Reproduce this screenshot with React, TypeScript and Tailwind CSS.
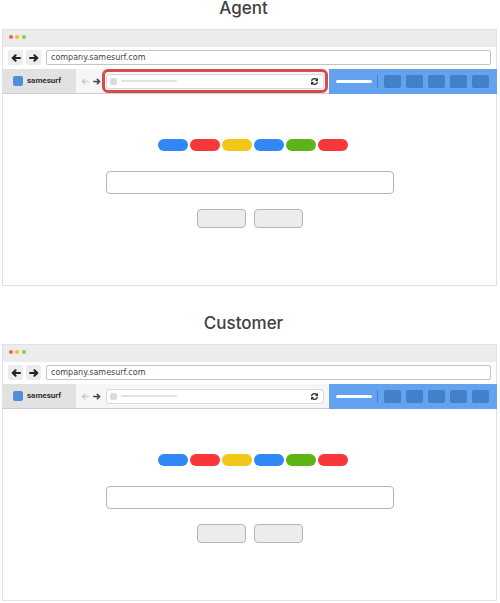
import React from "react";

const PILLS = [
  "bg-[#3087f5]",
  "bg-[#f83838]",
  "bg-[#f3c717]",
  "bg-[#3087f5]",
  "bg-[#5eb317]",
  "bg-[#f83838]",
];

function Arrow({ flip = false, className = "" }: { flip?: boolean; className?: string }) {
  return (
    <svg
      viewBox="0 0 10 8"
      aria-hidden="true"
      fill="none"
      stroke="currentColor"
      strokeWidth="2"
      className={`${className} ${flip ? "-scale-x-100" : ""}`}
    >
      <path d="M1 4H8M5.4 1.2L8.3 4L5.4 6.8" strokeLinecap="round" strokeLinejoin="round" />
    </svg>
  );
}

function Refresh() {
  return (
    <svg viewBox="0 0 1536 1536" aria-hidden="true" fill="currentColor" className="size-[7px]">
      <path
        stroke="currentColor"
        strokeWidth="60"
        d="M1511 928q0 5-1 7-64 268-268 434.5t-478 166.5q-146 0-282.5-55t-243.5-157l-129 129q-19 19-45 19t-45-19-19-45v-448q0-26 19-45t45-19h448q26 0 45 19t19 45-19 45l-137 137q71 66 161 102t187 36q134 0 250-65t186-179q11-17 53-117 8-23 30-23h192q13 0 22.5 9.5t9.5 22.5zm25-800v448q0 26-19 45t-45 19h-448q-26 0-45-19t-19-45 19-45l138-138q-148-137-349-137-134 0-250 65t-186 179q-11 17-53 117-8 23-30 23h-199q-13 0-22.5-9.5t-9.5-22.5v-7q65-268 270-434.5t480-166.5q146 0 284 55.5t245 156.5l130-129q19-19 45-19t45 19 19 45z"
      />
    </svg>
  );
}

function TitleBar() {
  return (
    <div className="flex h-[18px] items-center gap-[2px] border border-b-0 border-[#e2e2e2] bg-[#ececec] px-[6px] pb-[3px]">
      <span className="size-1 rounded-full bg-[#ed5f5c]" />
      <span className="size-1 rounded-full bg-[#fabd09]" />
      <span className="ml-px size-1 rounded-full bg-[#8fcb52]" />
    </div>
  );
}

function AddressRow() {
  return (
    <div className="flex h-[22px] items-center gap-[3px] border-x border-[#e2e2e2] px-[5px] pb-px">
      <button aria-label="Back" className="flex size-[15px] items-center justify-center rounded-[2px] bg-[#ececec] text-[#222]">
        <Arrow flip className="h-2 w-[10px]" />
      </button>
      <button aria-label="Forward" className="flex size-[15px] items-center justify-center rounded-[2px] bg-[#ececec] text-[#222]">
        <Arrow className="h-2 w-[10px]" />
      </button>
      <input
        aria-label="Address"
        defaultValue="company.samesurf.com"
        className="ml-[2px] h-[15px] min-w-0 flex-1 rounded-[2px] border border-[#c4c4c4] bg-white px-1 font-['DejaVu_Sans',sans-serif] text-[8px] leading-3 text-[#444] outline-none"
      />
    </div>
  );
}

function Toolbar({ highlighted }: { highlighted: boolean }) {
  return (
    <div className="flex h-[25px]">
      <div className="flex w-[74px] items-center gap-1 border-b border-[#cfcfcf] bg-[#e2e2e2] pl-[11px]">
        <span className="size-[10px] rounded-[2px] bg-[#508edc]" />
        <span className="font-[Roboto,sans-serif] text-[8px] leading-3 font-bold text-[#333]">samesurf</span>
      </div>
      <div className="flex min-w-0 flex-1 items-center border-b border-[#cfcfcf] bg-[#f6f6f6] pl-[5px]">
        <button aria-label="Page back" className="mr-1 text-[#ccc]">
          <Arrow flip className="h-[7px] w-2" />
        </button>
        <button aria-label="Page forward" className="text-[#444]">
          <Arrow className="h-[7px] w-2" />
        </button>
        <div
          className={`mx-px flex h-6 min-w-0 flex-1 items-center rounded-md border-3 px-px ${
            highlighted ? "border-[#d94a4a]" : "border-transparent"
          }`}
        >
          <div className="flex h-[15px] flex-1 items-center rounded-[3px] border border-[#d9d9d9] bg-white px-[3px]">
            <span className="size-[7px] rounded-[2px] bg-[#dcdcdc]" />
            <span className="ml-1 h-[2px] w-14 rounded-full bg-[#e2e2e2]" />
            <button aria-label="Refresh" className="mr-[2px] ml-auto text-[#333]">
              <Refresh />
            </button>
          </div>
        </div>
      </div>
      <div className="flex w-[168px] items-center bg-[#62a2ee] px-[7px]">
        <span className="h-[3px] w-9 rounded-full bg-white" />
        <span className="mx-[5px] h-[13px] w-px bg-[#4280c8]" />
        <div className="ml-px flex gap-[5px]">
          {[1, 2, 3, 4, 5].map((n) => (
            <button key={n} aria-label={`Tool ${n}`} className="h-[13px] w-[17px] rounded-[2px] bg-[#4280c8]" />
          ))}
        </div>
      </div>
    </div>
  );
}

function SearchPage() {
  return (
    <div className="flex flex-col items-center border border-t-0 border-[#e2e2e2] pt-[45px] pb-[57px]">
      <div className="flex gap-[2px] pl-[6px]">
        {PILLS.map((color, i) => (
          <span key={i} className={`h-3 w-[30px] rounded-full ${color}`} />
        ))}
      </div>
      <input
        aria-label="Search"
        className="mt-5 h-[23px] w-[288px] rounded-[4px] border border-[#b5b5b5] bg-white px-2 text-xs outline-none"
      />
      <div className="mt-[15px] flex gap-2">
        <button aria-label="Search the web" className="h-[19px] w-[49px] rounded-[4px] border border-[#b5b5b5] bg-[#ececec]" />
        <button aria-label="First result" className="h-[19px] w-[49px] rounded-[4px] border border-[#b5b5b5] bg-[#ececec]" />
      </div>
    </div>
  );
}

function Browser({ title, highlighted = false }: { title: string; highlighted?: boolean }) {
  return (
    <section>
      <h2 className="mb-[13px] pr-3 text-center font-[Inter,sans-serif] text-[17px] leading-4 font-medium text-[#404043]">
        {title}
      </h2>
      <TitleBar />
      <AddressRow />
      <Toolbar highlighted={highlighted} />
      <SearchPage />
    </section>
  );
}

export default function App() {
  return (
    <main className="flex flex-col gap-[29px] bg-white pr-[3px] pb-[2px] pl-[2px]">
      <Browser title="Agent" highlighted />
      <Browser title="Customer" />
    </main>
  );
}
